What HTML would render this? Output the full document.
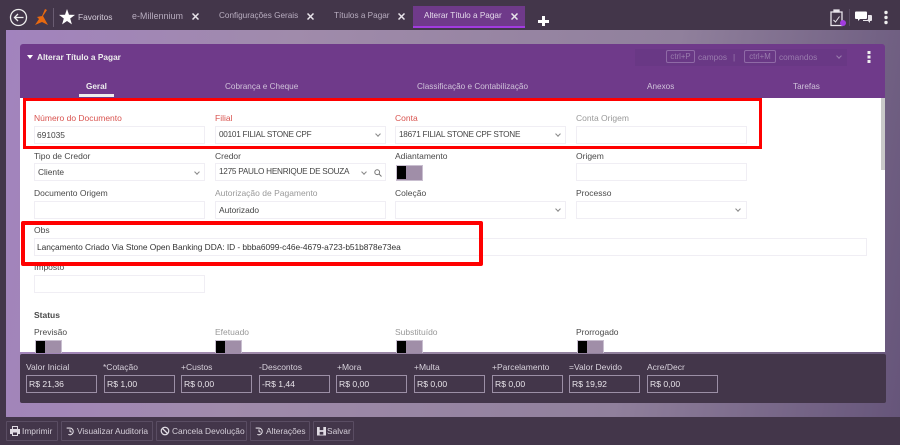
<!DOCTYPE html>
<html lang="pt"><head><meta charset="utf-8"><title>Alterar Título a Pagar</title>
<style>
*{box-sizing:border-box}
html,body{margin:0;padding:0}
body{width:900px;height:445px;overflow:hidden;position:relative;background:#43364a;font-family:"Liberation Sans",sans-serif;font-size:8.7px;color:#444}
#w{position:absolute;left:0;top:0;width:900px;height:445px;filter:blur(.35px)}
.a{position:absolute;white-space:nowrap}
#bg{left:6px;top:30px;width:894px;height:387px;background:linear-gradient(100deg,#a283be 0%,#a08bab 30%,#90809c 70%,#66557a 100%)}
.tab{color:#b9aec0;font-size:8.2px;top:11px;line-height:10px}
.lb{font-size:8.5px;color:#4a4a4a}
.lr{color:#d9534f}
.lg{color:#999}
.in{height:18px;background:#fff;border:1px solid #f0eef4;font-size:8.4px;color:#444;line-height:16px;padding-left:3px;white-space:nowrap;overflow:hidden}
.up{font-size:8.2px;letter-spacing:-.25px}
.chev{position:absolute;width:4px;height:4px;border-right:1px solid #888;border-bottom:1px solid #888;transform:rotate(45deg)}
.tg{width:27px;height:16px;background:#a08ea8;border:1px solid #c9bfd0;overflow:hidden}
.tg i{display:block;width:9px;height:13px;margin:0;background:#000}
.tgc{height:13px;border-bottom:0}
.red{border:3px solid #f00}
.bl{color:#d8d2dc;font-size:8.5px;top:362px}
.bi{top:375px;width:71px;height:18px;border:1px solid #9c8fa6;color:#e8e4ea;font-size:8.6px;line-height:16px;padding-left:2px}
.btn{top:421px;height:20px;border:1px solid #5a4d63;background:#43364a;color:#d5cfd9;font-size:8.4px;line-height:18px;padding-left:15px;border-radius:1px}
.btn svg{position:absolute;left:3px;top:3px}
.tabh{top:82px;color:#d0c3da;font-size:8.2px}
</style></head><body>
<div id="w">
<div class="a" id="bg"></div>

<!-- top bar -->
<svg class="a" style="left:9px;top:8px" width="20" height="20" viewBox="0 0 20 20" fill="none" stroke="#eee" stroke-width="1.3"><circle cx="9.5" cy="9.5" r="8"/><path d="M14.5 9.5H5.5M9 6L5.500 9.500L9 13"/></svg>
<svg class="a" style="left:34px;top:9px" width="15" height="17" viewBox="0 0 15 17"><path d="M11 0L13 1L9 7L14 16L8 13L1 16L5 10L3 8L8 7Z" fill="#e8690f"/></svg>
<div class="a" style="left:53px;top:8px;width:1px;height:19px;background:#6a5d72"></div>
<svg class="a" style="left:59px;top:9px" width="16" height="16" viewBox="0 0 16 16"><path d="M8 0L10 5.700L16 5.900L11.200 9.500L12.900 15.400L8 12L3.100 15.400L4.800 9.500L0 5.900L6 5.700Z" fill="#fff"/></svg>
<div class="a" style="left:78px;top:12px;color:#d4ccd9;font-size:8.400px">Favoritos</div>
<div class="a tab" style="left:132px;letter-spacing:.1px;font-size:8.800px">e-Millennium</div>
<svg class="a" style="left:192px;top:13px" width="7" height="7" stroke="#e8e4ea" stroke-width="1.500"><path d="M.5 .5L6.500 6.500M6.500 .5L.5 6.500"/></svg>
<div class="a tab" style="left:219px">Configurações Gerais</div>
<svg class="a" style="left:307px;top:13px" width="7" height="7" stroke="#e8e4ea" stroke-width="1.500"><path d="M.5 .5L6.500 6.500M6.500 .5L.5 6.500"/></svg>
<div class="a tab" style="left:334px">Títulos a Pagar</div>
<svg class="a" style="left:398px;top:13px" width="7" height="7" stroke="#e8e4ea" stroke-width="1.500"><path d="M.5 .5L6.500 6.500M6.500 .5L.5 6.500"/></svg>
<div class="a" style="left:413px;top:6px;width:112px;height:22px;background:#6f3a8a;border-bottom:2px solid #a23be0"></div>
<div class="a tab" style="left:424px;color:#e6dcec">Alterar Título a Pagar</div>
<svg class="a" style="left:511px;top:13px" width="7" height="7" stroke="#e8e4ea" stroke-width="1.500"><path d="M.5 .5L6.500 6.500M6.500 .5L.5 6.500"/></svg>
<div class="a" style="left:538px;top:19.500px;width:11px;height:3px;background:#fff"></div>
<div class="a" style="left:542px;top:16px;width:3px;height:10px;background:#fff"></div>
<svg class="a" style="left:829px;top:8px" width="20" height="20" viewBox="0 0 20 20" fill="none" stroke="#e8e4ea" stroke-width="1.300"><path d="M2 4H13V17.500H2Z"/><path d="M5 4V2H10V4Z" fill="#e8e4ea"/><path d="M4.500 12L6.500 14L10.500 8.500" stroke-width="1"/><circle cx="14" cy="15" r="3" fill="#a23be0" stroke="none"/></svg>
<div class="a" style="left:849px;top:9px;width:1px;height:17px;background:#5a4d63"></div>
<svg class="a" style="left:854px;top:10px" width="19" height="15" viewBox="0 0 19 15"><path d="M2 1.500H12Q13 1.500 13 2.500V8Q13 9 12 9H6L4 11V9H2Q1 9 1 8V2.500Q1 1.500 2 1.500Z" fill="#fff"/><path d="M14 5H17Q18 5 18 6V10Q18 11 17 11H16V13L14 11H9V10H13Q14 10 14 9Z" fill="#e8e4ea"/></svg>
<svg class="a" style="left:883px;top:10px" width="6" height="15"><circle cx="3" cy="2.500" r="1.700" fill="#eee"/><circle cx="3" cy="7.500" r="1.700" fill="#eee"/><circle cx="3" cy="12.500" r="1.700" fill="#eee"/></svg>

<!-- panel header -->
<div class="a" style="left:20px;top:44px;width:865px;height:54px;background:#6f3a8a;border-radius:3px 3px 0 0"></div>
<div class="a" style="left:27px;top:55px;width:0;height:0;border-left:3.500px solid transparent;border-right:3.500px solid transparent;border-top:4px solid #fff"></div>
<div class="a" style="left:37px;top:52px;color:#eee;font-size:8.300px;font-weight:bold;line-height:11px">Alterar Título a Pagar</div>
<div class="a" style="left:635px;top:49px;width:212px;height:17px;background:#693885"></div>
<div class="a" style="left:666px;top:50px;width:29px;height:13px;border:1px solid #8f6aa6;border-radius:2px;color:#9a7cae;font-size:7.800px;line-height:11px;text-align:center">ctrl+P</div>
<div class="a" style="left:698px;top:52px;color:#9a7cae;font-size:8.300px">campos</div>
<div class="a" style="left:733px;top:52px;color:#9a7cae;font-size:8.300px">|</div>
<div class="a" style="left:744px;top:50px;width:32px;height:13px;border:1px solid #8f6aa6;border-radius:2px;color:#9a7cae;font-size:7.800px;line-height:11px;text-align:center">ctrl+M</div>
<div class="a" style="left:779px;top:52px;color:#9a7cae;font-size:8.300px">comandos</div>
<div class="chev" style="left:837px;top:54px;border-color:#9a7cae"></div>
<svg class="a" style="left:866px;top:51px" width="6" height="12"><rect x="1.500" y="0" width="3" height="3" fill="#eee"/><rect x="1.500" y="4.500" width="3" height="3" fill="#eee"/><rect x="1.500" y="9" width="3" height="3" fill="#eee"/></svg>
<div class="a tabh" style="left:86px;color:#eee;font-weight:bold">Geral</div>
<div class="a" style="left:79px;top:94px;width:35px;height:3px;background:#eee"></div>
<div class="a tabh" style="left:225px">Cobrança e Cheque</div>
<div class="a tabh" style="left:417px">Classificação e Contabilização</div>
<div class="a tabh" style="left:647px">Anexos</div>
<div class="a tabh" style="left:793px">Tarefas</div>

<!-- panel body -->
<div class="a" style="left:20px;top:98px;width:865px;height:254px;background:#fff"></div>
<div class="a" style="left:881px;top:98px;width:4px;height:72px;background:#c9c9c9"></div>

<div class="a lb lr" style="left:34px;top:113px">Número do Documento</div>
<div class="a lb lr" style="left:215px;top:113px">Filial</div>
<div class="a lb lr" style="left:395px;top:113px">Conta</div>
<div class="a lb lg" style="left:576px;top:113px">Conta Origem</div>
<div class="a in" style="left:34px;top:126px;width:171px;padding-left:2px">691035</div>
<div class="a in up" style="left:215px;top:126px;width:171px">00101 FILIAL STONE CPF</div><div class="chev" style="left:376px;top:132px"></div>
<div class="a in up" style="left:395px;top:126px;width:171px">18671 FILIAL STONE CPF STONE</div><div class="chev" style="left:556px;top:132px"></div>
<div class="a in" style="left:576px;top:126px;width:171px"></div>

<div class="a lb" style="left:34px;top:151px">Tipo de Credor</div>
<div class="a lb" style="left:215px;top:151px">Credor</div>
<div class="a lb" style="left:395px;top:151px">Adiantamento</div>
<div class="a lb" style="left:576px;top:151px">Origem</div>
<div class="a in" style="left:34px;top:163px;width:171px">Cliente</div><div class="chev" style="left:195px;top:170px"></div>
<div class="a in up" style="left:215px;top:163px;width:171px">1275 PAULO HENRIQUE DE SOUZA</div><div class="chev" style="left:362px;top:170px"></div>
<svg class="a" style="left:374px;top:169px" width="8" height="8" fill="none" stroke="#777"><circle cx="3.200" cy="3.200" r="2.400"/><path d="M5 5L7.500 7.500"/></svg>
<div class="a tg" style="left:396px;top:165px"><i></i></div>
<div class="a in" style="left:576px;top:163px;width:171px"></div>

<div class="a lb" style="left:34px;top:188px">Documento Origem</div>
<div class="a lb lg" style="left:215px;top:188px">Autorização de Pagamento</div>
<div class="a lb" style="left:395px;top:188px">Coleção</div>
<div class="a lb" style="left:576px;top:188px">Processo</div>
<div class="a in" style="left:34px;top:201px;width:171px"></div>
<div class="a in" style="left:215px;top:201px;width:171px">Autorizado</div>
<div class="a in" style="left:395px;top:201px;width:171px"></div><div class="chev" style="left:556px;top:207px"></div>
<div class="a in" style="left:576px;top:201px;width:171px"></div><div class="chev" style="left:736px;top:207px"></div>

<div class="a lb" style="left:34px;top:225px">Obs</div>
<div class="a in" style="left:34px;top:238px;width:833px;color:#333;letter-spacing:-.04px;padding-left:2px">Lançamento Criado Via Stone Open Banking DDA: ID - bbba6099-c46e-4679-a723-b51b878e73ea</div>
<div class="a lb" style="left:34px;top:262px">Imposto</div>
<div class="a in" style="left:34px;top:275px;width:171px"></div>

<div class="a lb" style="left:34px;top:310px;font-weight:bold">Status</div>
<div class="a lb" style="left:34px;top:327px">Previsão</div>
<div class="a lb lg" style="left:215px;top:327px">Efetuado</div>
<div class="a lb lg" style="left:395px;top:327px">Substituído</div>
<div class="a lb" style="left:576px;top:327px">Prorrogado</div>
<div class="a tg tgc" style="left:35px;top:340px"><i></i></div>
<div class="a tg tgc" style="left:215px;top:340px"><i></i></div>
<div class="a tg tgc" style="left:396px;top:340px"><i></i></div>
<div class="a tg tgc" style="left:577px;top:340px"><i></i></div>

<!-- red highlights -->
<div class="a red" style="left:23px;top:98px;width:739px;height:51px"></div>
<div class="a red" style="left:21px;top:221px;width:462px;height:45px;border-width:4px;border-radius:2px"></div>

<!-- totals -->
<div class="a" style="left:20px;top:354px;width:866px;height:49px;background:#43364a;border-radius:2px"></div>
<div class="a bl" style="left:26px">Valor Inicial</div><div class="a bi" style="left:26px">R$ 21,36</div>
<div class="a bl" style="left:103px">*Cotação</div><div class="a bi" style="left:104px">R$ 1,00</div>
<div class="a bl" style="left:181px">+Custos</div><div class="a bi" style="left:181px">R$ 0,00</div>
<div class="a bl" style="left:259px">-Descontos</div><div class="a bi" style="left:259px">-R$ 1,44</div>
<div class="a bl" style="left:337px">+Mora</div><div class="a bi" style="left:336px">R$ 0,00</div>
<div class="a bl" style="left:414px">+Multa</div><div class="a bi" style="left:414px">R$ 0,00</div>
<div class="a bl" style="left:492px">+Parcelamento</div><div class="a bi" style="left:492px">R$ 0,00</div>
<div class="a bl" style="left:569px">=Valor Devido</div><div class="a bi" style="left:569px">R$ 19,92</div>
<div class="a bl" style="left:647px">Acre/Decr</div><div class="a bi" style="left:647px">R$ 0,00</div>

<!-- bottom buttons -->
<div class="a btn" style="left:6px;width:52px"><svg width="10" height="12" viewBox="0 0 10 12"><path d="M2 1H8V4H10V9H8V11H2V9H0V4H2ZM3 2V4H7V2ZM3 7.500V10H7V7.500Z" fill="#e0dbe3" fill-rule="evenodd"/></svg>Imprimir</div>
<div class="a btn" style="left:61px;width:92px"><svg width="10" height="12" viewBox="0 0 12 12" fill="none" stroke="#e0dbe3" stroke-width="1.300"><path d="M2 2.500H6A4 4 0 1 1 4 10M6 4V6.500L8 7.500"/></svg>Visualizar Auditoria</div>
<div class="a btn" style="left:156px;width:91px"><svg width="10" height="12" viewBox="0 0 12 12" fill="none" stroke="#e0dbe3" stroke-width="1.500"><circle cx="6" cy="6" r="4.500"/><path d="M3 3L9 9"/></svg>Cancela Devolução</div>
<div class="a btn" style="left:250px;width:60px"><svg width="10" height="12" viewBox="0 0 12 12" fill="none" stroke="#e0dbe3" stroke-width="1.300"><path d="M2 2.500H6A4 4 0 1 1 4 10M6 4V6.500L8 7.500"/></svg>Alterações</div>
<div class="a btn" style="left:313px;width:41px;padding-left:13px"><svg width="9" height="12" viewBox="0 0 10 12"><path d="M0 1.500H10V11H0ZM3 1.500V5H7V1.500ZM3 7V10H7V7Z" fill="#e0dbe3" fill-rule="evenodd"/></svg>Salvar</div>
</div>
</body></html>
